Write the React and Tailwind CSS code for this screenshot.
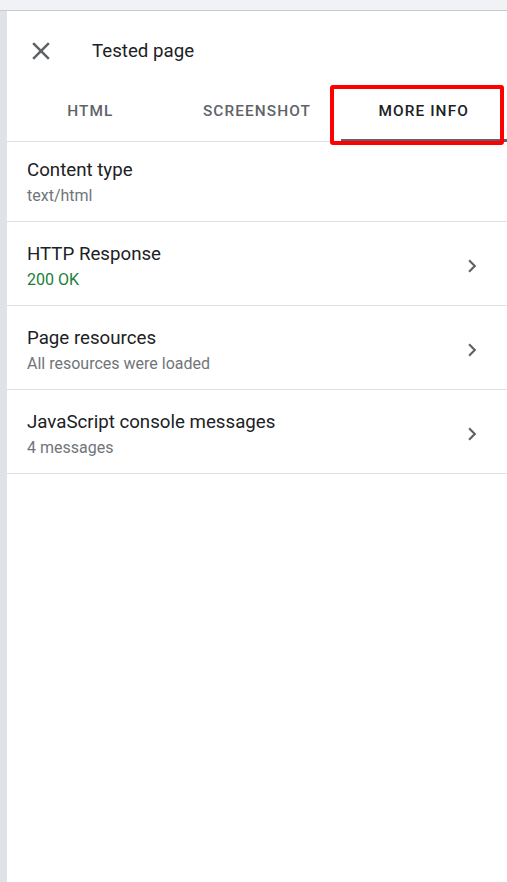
import React from "react";

function Chevron() {
  return (
    <svg width="26" height="26" viewBox="0 0 24 24" className="fill-[#5f6368] -mt-[2px]">
      <path d="M10 6 8.59 7.41 13.17 12l-4.58 4.59L10 18l6-6z" />
    </svg>
  );
}

function Row({ title, sub, subClass, chevron, first }) {
  return (
    <div
      className={`flex items-center border-b border-[#e0e0e0] pl-5 pr-[22px] ${
        first ? "h-[80px] pt-[2px]" : "h-[84px] pt-[6px]"
      }`}
    >
      <div className="flex-1 flex flex-col">
        <div className="text-[18.7px] leading-[24px] text-[#202124]">{title}</div>
        <div className={`text-[16px] leading-[22px] mt-[3px] ${subClass}`}>{sub}</div>
      </div>
      {chevron && <Chevron />}
    </div>
  );
}

export default function App() {
  return (
    <div
      className="w-[507px] h-[882px] bg-[#f0f2f5] flex flex-col overflow-hidden"
      style={{ fontFamily: "Roboto, 'Liberation Sans', sans-serif" }}
    >
      <div className="h-[11px] shrink-0 border-b border-[#c8ccd1]" />
      <div className="flex flex-1">
        <div className="w-[7px] bg-[#dfe3e8]" />
        <div className="flex-1 bg-white flex flex-col">
          <div className="h-[70px] flex items-center pl-[19px] pt-[10px]">
            <svg width="30" height="30" viewBox="0 0 24 24" className="fill-[#5f6368]">
              <path d="M19 6.41 17.59 5 12 10.59 6.41 5 5 6.41 10.59 12 5 17.59 6.41 19 12 13.41 17.59 19 19 17.59 13.41 12z" />
            </svg>
            <div className="ml-[36px] text-[18.7px] text-[#202124]">Tested page</div>
          </div>
          <div className="h-[61px] grid grid-cols-3 border-b border-[#e0e0e0]">
            <div className="flex items-center justify-center pt-[2px] text-[15.4px] font-medium tracking-[1.1px] text-[#5f6368]">
              HTML
            </div>
            <div className="flex items-center justify-center pt-[2px] text-[15.4px] font-medium tracking-[1.1px] text-[#5f6368]">
              SCREENSHOT
            </div>
            <div className="relative flex items-center justify-center pt-[2px] text-[15.4px] font-medium tracking-[1.1px] text-[#202124]">
              MORE INFO
              <div className="absolute left-[1px] right-0 bottom-[-1px] h-[3px] bg-[#5f6368]" />
              <div className="absolute left-[-10px] right-[3px] top-[4px] bottom-[-4px] border-[4px] border-[#ff0000] rounded-[3px]" />
            </div>
          </div>
          <Row first title="Content type" sub="text/html" subClass="text-[#70757a]" />
          <Row title="HTTP Response" sub="200 OK" subClass="text-[#188038]" chevron />
          <Row title="Page resources" sub="All resources were loaded" subClass="text-[#70757a]" chevron />
          <Row title="JavaScript console messages" sub="4 messages" subClass="text-[#70757a]" chevron />
        </div>
      </div>
    </div>
  );
}
